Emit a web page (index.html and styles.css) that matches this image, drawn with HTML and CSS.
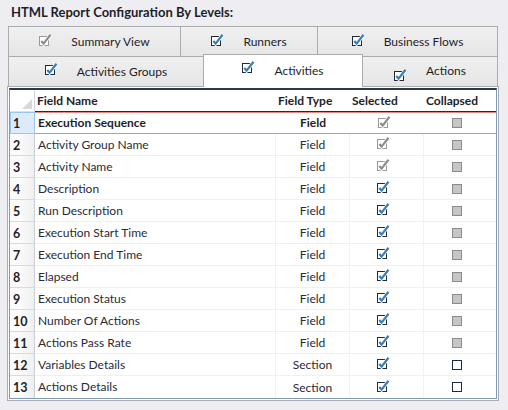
FILE: index.html
```html
<!DOCTYPE html>
<html>
<head>
<meta charset="utf-8">
<link rel="stylesheet" href="styles.css">
</head>
<body>
<svg width="0" height="0" class="defs">
  <defs>
    <symbol id="chk" viewBox="0 0 14 14">
      <rect x="0.5" y="3.5" width="9" height="9" fill="#fff" stroke="#1e2d3d" stroke-width="1"/>
      <path d="M2.3 8 L4.6 10.6 L11.5 1.8" fill="none" stroke="#fff" stroke-width="3.6"/>
      <path d="M2.3 8 L4.6 10.6 L11.5 1.8" fill="none" stroke="#3a7db3" stroke-width="2.2"/>
    </symbol>
    <symbol id="chkd" viewBox="0 0 14 14">
      <rect x="0.5" y="3.5" width="9" height="9" fill="#fff" stroke="#9a9a9a" stroke-width="1"/>
      <path d="M2.3 8 L4.6 10.6 L11.5 1.8" fill="none" stroke="#fff" stroke-width="3.6"/>
      <path d="M2.3 8 L4.6 10.6 L11.5 1.8" fill="none" stroke="#8c8c8c" stroke-width="2.2"/>
    </symbol>
  </defs>
</svg>
<div class="title">HTML Report Configuration By Levels:</div>
<div class="tabs">
  <div class="row">
    <div class="tab w1"><svg class="ic"><use href="#chkd"/></svg><span>Summary View</span></div>
    <div class="tab w2"><svg class="ic"><use href="#chk"/></svg><span>Runners</span></div>
    <div class="tab w3"><svg class="ic"><use href="#chk"/></svg><span>Business Flows</span></div>
  </div>
  <div class="row row2">
    <div class="tab w4"><svg class="ic up"><use href="#chk"/></svg><span>Activities Groups</span></div>
    <div class="tab sel w5"><svg class="ic up"><use href="#chk"/></svg><span>Activities</span></div>
    <div class="tab w6"><svg class="ic down"><use href="#chk"/></svg><span class="upt">Actions</span></div>
  </div>
</div>
<div class="panel">
  <div class="grid">
    <div class="hdr corner"><span class="tri"></span></div>
    <div class="hdr">Field Name</div>
    <div class="hdr">Field Type</div>
    <div class="hdr">Selected</div>
    <div class="hdr">Collapsed</div>

    <div class="rh first">1</div>
    <div class="c first b">Execution Sequence</div>
    <div class="c first b ctr">Field</div>
    <div class="c first ctr"><svg class="cb"><use href="#chkd"/></svg></div>
    <div class="c first ctr"><span class="box dis"></span></div>

    <div class="rh">2</div><div class="c">Activity Group Name</div><div class="c ctr">Field</div>
    <div class="c ctr"><svg class="cb"><use href="#chkd"/></svg></div><div class="c ctr"><span class="box dis"></span></div>

    <div class="rh">3</div><div class="c">Activity Name</div><div class="c ctr">Field</div>
    <div class="c ctr"><svg class="cb"><use href="#chkd"/></svg></div><div class="c ctr"><span class="box dis"></span></div>

    <div class="rh">4</div><div class="c">Description</div><div class="c ctr">Field</div>
    <div class="c ctr"><svg class="cb"><use href="#chk"/></svg></div><div class="c ctr"><span class="box dis"></span></div>

    <div class="rh">5</div><div class="c">Run Description</div><div class="c ctr">Field</div>
    <div class="c ctr"><svg class="cb"><use href="#chk"/></svg></div><div class="c ctr"><span class="box dis"></span></div>

    <div class="rh">6</div><div class="c">Execution Start Time</div><div class="c ctr">Field</div>
    <div class="c ctr"><svg class="cb"><use href="#chk"/></svg></div><div class="c ctr"><span class="box dis"></span></div>

    <div class="rh">7</div><div class="c">Execution End Time</div><div class="c ctr">Field</div>
    <div class="c ctr"><svg class="cb"><use href="#chk"/></svg></div><div class="c ctr"><span class="box dis"></span></div>

    <div class="rh">8</div><div class="c">Elapsed</div><div class="c ctr">Field</div>
    <div class="c ctr"><svg class="cb"><use href="#chk"/></svg></div><div class="c ctr"><span class="box dis"></span></div>

    <div class="rh">9</div><div class="c">Execution Status</div><div class="c ctr">Field</div>
    <div class="c ctr"><svg class="cb"><use href="#chk"/></svg></div><div class="c ctr"><span class="box dis"></span></div>

    <div class="rh">10</div><div class="c">Number Of Actions</div><div class="c ctr">Field</div>
    <div class="c ctr"><svg class="cb"><use href="#chk"/></svg></div><div class="c ctr"><span class="box dis"></span></div>

    <div class="rh">11</div><div class="c">Actions Pass Rate</div><div class="c ctr">Field</div>
    <div class="c ctr"><svg class="cb"><use href="#chk"/></svg></div><div class="c ctr"><span class="box dis"></span></div>

    <div class="rh">12</div><div class="c">Variables Details</div><div class="c ctr">Section</div>
    <div class="c ctr"><svg class="cb"><use href="#chk"/></svg></div><div class="c ctr"><span class="box"></span></div>

    <div class="rh last">13</div><div class="c last">Actions Details</div><div class="c last ctr">Section</div>
    <div class="c last ctr"><svg class="cb"><use href="#chk"/></svg></div><div class="c last ctr"><span class="box"></span></div>
  </div>
</div>
</body>
</html>
```
FILE: styles.css
```css
html, body {
  margin: 0;
  padding: 0;
  background: #eeeef2;
  font-family: Lato, "Noto Sans", sans-serif;
  font-size: 12px;
  color: #2a2a38;
}
.defs { position: absolute; width: 0; height: 0; }
.title {
  height: 26px;
  line-height: 24px;
  padding-left: 11px;
  font-weight: bold;
  font-size: 13px;
  color: #1e1e28;
}
.tabs { padding-left: 8px; }
.row { display: flex; }
.row2 { margin-top: -1px; }
.tab {
  box-sizing: border-box;
  height: 31px;
  border: 1px solid #acacac;
  margin-left: -1px;
  background: linear-gradient(#f0f0f0, #e5e5e5);
  display: flex;
  align-items: center;
  justify-content: center;
  gap: 18px;
  color: #1e1e28;
}
.row .tab:first-child { margin-left: 0; }
.w1 { width: 173px; }
.w2 { width: 138px; }
.w3 { width: 181px; }
.w4 { width: 196px; }
.w5 { width: 160px; }
.w6 { width: 136px; }
.tab.sel {
  height: 33px;
  margin-top: -2px;
  background: #fff;
  border-bottom: none;
  position: relative;
  z-index: 2;
  padding-bottom: 2px;
}
.ic { width: 14px; height: 14px; margin-top: -3px; }
.ic.up { margin-top: -6px; }
.ic.down { margin-top: 6px; }
.upt { margin-top: -2px; }
.panel {
  position: relative;
  z-index: 1;
  margin-top: -1px;
  margin-left: 7px;
  width: 492px;
  box-sizing: border-box;
  border: 1px solid #acacac;
  background: #fff;
  padding: 1px;
}
.grid {
  display: grid;
  grid-template-columns: 25px 241px 74px 74px 72px;
  grid-auto-rows: 22px;
  border-left: 1px solid #7d98b8;
  border-right: 1px solid #7d98b8;
  border-bottom: 1px solid #7d98b8;
  border-top: 2px solid #2a3a4c;
}
.hdr {
  height: 22px;
  box-sizing: border-box;
  border-bottom: 1px solid #1e2d3d;
  font-weight: bold;
  padding-left: 2px;
  line-height: 22px;
  color: #1e1e28;
  white-space: nowrap;
}
.corner {
  padding: 0;
  border-bottom: 1px solid #e0e0e0;
  border-right: 1px solid #cfd6de;
  display: flex;
  justify-content: flex-end;
  align-items: flex-end;
}
.tri {
  width: 0; height: 0;
  border-left: 10px solid transparent;
  border-bottom: 10px solid #d9d9d9;
  margin: 0 2px 2px 0;
}
.rh {
  box-sizing: border-box;
  font-weight: bold;
  font-size: 12.5px;
  padding-left: 3px;
  line-height: 24px;
  background: linear-gradient(to right, #fbfbfb 40%, #efefef);
  border-right: 1px solid #c9cfd6;
  border-bottom: 1px solid #dadada;
  color: #1e1e28;
}
.rh.first {
  background: #dcebfa;
  border: 1px solid #9cc7ec;
  line-height: 22px;
  padding-left: 2px;
}
.c {
  box-sizing: border-box;
  border-bottom: 1px solid #f0f0f0;
  border-right: 1px solid #f2f2f2;
  padding-left: 3px;
  line-height: 21px;
  white-space: nowrap;
}
.c:nth-child(5n) { border-right: none; }
.c.first {
  border-top: 1px solid #e98a8a;
  border-bottom: 1px solid #e98a8a;
  border-right: none;
  line-height: 20px;
}
.b { font-weight: bold; color: #1e1e28; }
.ctr {
  padding-left: 0;
  display: flex;
  justify-content: center;
  align-items: center;
}
.c.last, .rh.last { border-bottom: none; }
.cb { width: 14px; height: 14px; margin-top: -3px; margin-left: -5px; }
.box {
  width: 10px;
  height: 10px;
  box-sizing: border-box;
  border: 1px solid #1e2d3d;
  background: #fff;
  margin-left: -7px;
}
.box.dis {
  border-color: #8a8a8a;
  background: #c6c6c6;
}
```
